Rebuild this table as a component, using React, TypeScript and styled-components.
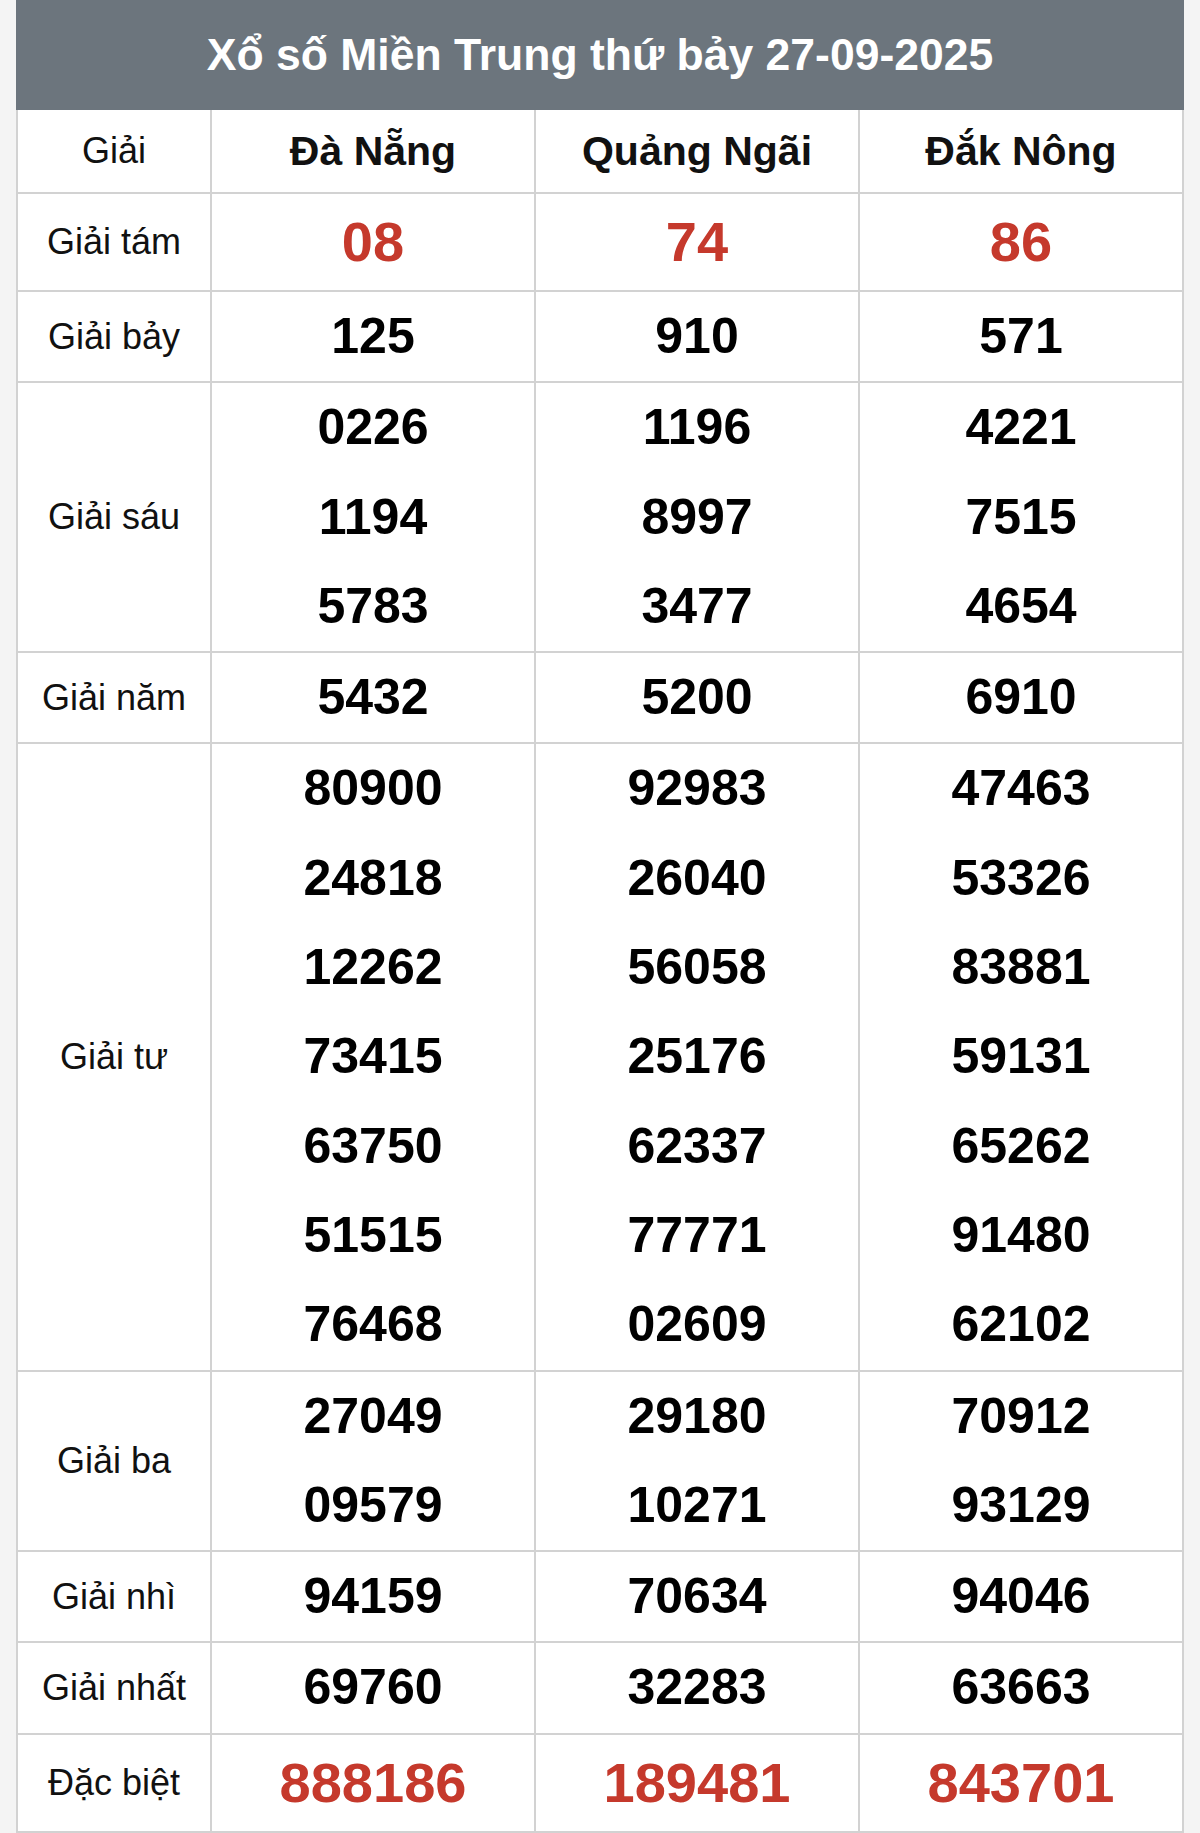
import styled, { createGlobalStyle } from 'styled-components';

const GlobalStyle = createGlobalStyle`
  html, body {
    margin: 0;
    padding: 0;
    background: #f4f4f4;
  }
  body {
    font-family: "Liberation Sans", Arial, sans-serif;
  }
`;

interface ProvinceResult {
  name: string;
}

interface PrizeRow {
  label: string;
  values: string[][]; // one list of numbers per province
  highlight?: boolean;
}

const provinces: ProvinceResult[] = [
  { name: 'Đà Nẵng' },
  { name: 'Quảng Ngãi' },
  { name: 'Đắk Nông' },
];

const prizes: PrizeRow[] = [
  { label: 'Giải tám', values: [['08'], ['74'], ['86']], highlight: true },
  { label: 'Giải bảy', values: [['125'], ['910'], ['571']] },
  {
    label: 'Giải sáu',
    values: [
      ['0226', '1194', '5783'],
      ['1196', '8997', '3477'],
      ['4221', '7515', '4654'],
    ],
  },
  { label: 'Giải năm', values: [['5432'], ['5200'], ['6910']] },
  {
    label: 'Giải tư',
    values: [
      ['80900', '24818', '12262', '73415', '63750', '51515', '76468'],
      ['92983', '26040', '56058', '25176', '62337', '77771', '02609'],
      ['47463', '53326', '83881', '59131', '65262', '91480', '62102'],
    ],
  },
  {
    label: 'Giải ba',
    values: [
      ['27049', '09579'],
      ['29180', '10271'],
      ['70912', '93129'],
    ],
  },
  { label: 'Giải nhì', values: [['94159'], ['70634'], ['94046']] },
  { label: 'Giải nhất', values: [['69760'], ['32283'], ['63663']] },
  { label: 'Đặc biệt', values: [['888186'], ['189481'], ['843701']], highlight: true },
];

const Page = styled.div`
  padding: 0 16px 2px 16px;
  box-sizing: border-box;
  width: 1200px;
`;

const Title = styled.h1`
  margin: 0;
  height: 110px;
  background: #6c757d;
  color: #ffffff;
  font-size: 44.5px;
  font-weight: 700;
  display: flex;
  align-items: center;
  justify-content: center;
`;

const ResultTable = styled.table`
  width: 100%;
  border-collapse: collapse;
  table-layout: fixed;
  background: #ffffff;
`;

const HeadCell = styled.th<{ $label?: boolean }>`
  border: 2px solid #d2d2d2;
  border-top: none;
  height: 82px;
  padding: 0;
  text-align: center;
  vertical-align: middle;
  color: #111;
  font-size: ${(p) => (p.$label ? '36px' : '41px')};
  font-weight: ${(p) => (p.$label ? 400 : 700)};
`;

const LabelCell = styled.td`
  border: 2px solid #d2d2d2;
  padding: 0;
  text-align: center;
  vertical-align: middle;
  font-size: 36px;
  color: #111;
`;

const NumberCell = styled.td`
  border: 2px solid #d2d2d2;
  padding: 0;
  text-align: center;
  vertical-align: middle;
`;

const Number = styled.div<{ $highlight?: boolean }>`
  line-height: ${(p) => (p.$highlight ? '96px' : '89.3px')};
  font-size: ${(p) => (p.$highlight ? '56px' : '50px')};
  font-weight: 700;
  color: ${(p) => (p.$highlight ? '#c5392c' : '#000000')};
`;

export default function App() {
  return (
    <Page>
      <GlobalStyle />
      <Title>Xổ số Miền Trung thứ bảy 27-09-2025</Title>
      <ResultTable>
        <colgroup>
          <col style={{ width: '194px' }} />
          <col />
          <col />
          <col />
        </colgroup>
        <thead>
          <tr>
            <HeadCell $label>Giải</HeadCell>
            {provinces.map((p) => (
              <HeadCell key={p.name}>{p.name}</HeadCell>
            ))}
          </tr>
        </thead>
        <tbody>
          {prizes.map((row) => (
            <tr key={row.label}>
              <LabelCell>{row.label}</LabelCell>
              {row.values.map((nums, i) => (
                <NumberCell key={i}>
                  {nums.map((n, j) => (
                    <Number key={j} $highlight={row.highlight}>
                      {n}
                    </Number>
                  ))}
                </NumberCell>
              ))}
            </tr>
          ))}
        </tbody>
      </ResultTable>
    </Page>
  );
}
